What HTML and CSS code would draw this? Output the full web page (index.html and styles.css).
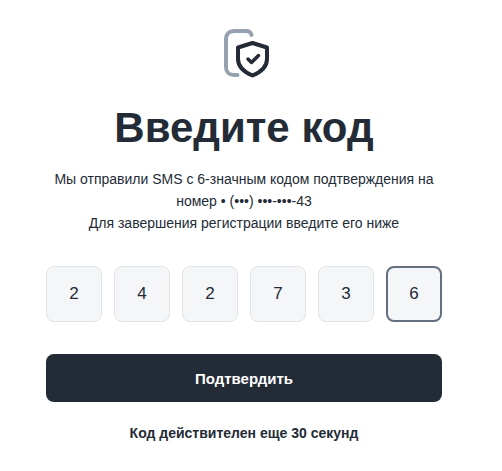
FILE: index.html
```html
<!DOCTYPE html>
<html lang="ru">
<head>
    <meta charset="UTF-8">
    <meta name="viewport" content="width=device-width, initial-scale=1.0">
    <title>Введите код</title>
    <link rel="stylesheet" href="styles.css">
</head>
<body>
    <form class="confirm">
        <svg class="confirm-icon" width="50" height="52" viewBox="0 0 50 52" fill="none" stroke-linecap="round" stroke-linejoin="round">
            <path d="M32.500 8C32 5.500 30 4 27 4H15C10 4 7 7 7 12V40C7 45 10 48 15 48H18.500" stroke="#97a2b0" stroke-width="4"/>
            <path d="M33.500 16L48 20.500V32C48 40 42 45 33.500 48.500C25 45 19 40 19 32V20.500Z" stroke="#232b36" stroke-width="4"/>
            <path d="M29 32L32.500 35.500L39.500 28.500" stroke="#232b36" stroke-width="3.500"/>
        </svg>
        <h1>Введите код</h1>
        <p class="confirm-text">
            Мы отправили SMS с 6-значным кодом подтверждения на номер • (•••) •••-•••-43<br>
            Для завершения регистрации введите его ниже
        </p>
        <div class="code">
            <input type="text" inputmode="numeric" maxlength="1" value="2" aria-label="Цифра 1">
            <input type="text" inputmode="numeric" maxlength="1" value="4" aria-label="Цифра 2">
            <input type="text" inputmode="numeric" maxlength="1" value="2" aria-label="Цифра 3">
            <input type="text" inputmode="numeric" maxlength="1" value="7" aria-label="Цифра 4">
            <input type="text" inputmode="numeric" maxlength="1" value="3" aria-label="Цифра 5">
            <input class="active" type="text" inputmode="numeric" maxlength="1" value="6" aria-label="Цифра 6">
        </div>
        <button type="submit">Подтвердить</button>
        <p class="timer">Код действителен еще 30 секунд</p>
    </form>
</body>
</html>
```
FILE: styles.css
```css
* {
    box-sizing: border-box;
}

body {
    margin: 0;
    padding: 27px 60px 24px 46px;
    background: #fff;
    color: #232b36;
    font-family: "Liberation Sans", Arial, sans-serif;
}

.confirm {
    display: flex;
    flex-direction: column;
    align-items: center;
    max-width: 480px;
    margin: 0 auto;
    text-align: center;
}

h1 {
    margin: 24px 0 15px;
    font-size: 42px;
    line-height: 50px;
    font-weight: bold;
}

.confirm-text {
    margin: 0 0 32px;
    font-size: 14px;
    line-height: 22px;
}

.code {
    display: grid;
    grid-template-columns: repeat(6, 1fr);
    gap: 12px;
    width: 100%;
}

.code input {
    width: 100%;
    height: 56px;
    padding: 0;
    border: 1px solid #dfe4e8;
    border-radius: 8px;
    background: #f4f6f8;
    color: #232b36;
    font-family: inherit;
    font-size: 17px;
    text-align: center;
    outline: none;
}

.code input.active,
.code input:focus {
    border: 2px solid #637080;
}

button {
    width: 100%;
    height: 48px;
    margin-top: 32px;
    border: none;
    border-radius: 8px;
    background: #232b36;
    color: #fff;
    font-family: inherit;
    font-size: 15px;
    font-weight: bold;
    cursor: pointer;
}

.timer {
    margin: 20px 0 0;
    font-size: 14px;
    line-height: 22px;
    font-weight: bold;
}
```
